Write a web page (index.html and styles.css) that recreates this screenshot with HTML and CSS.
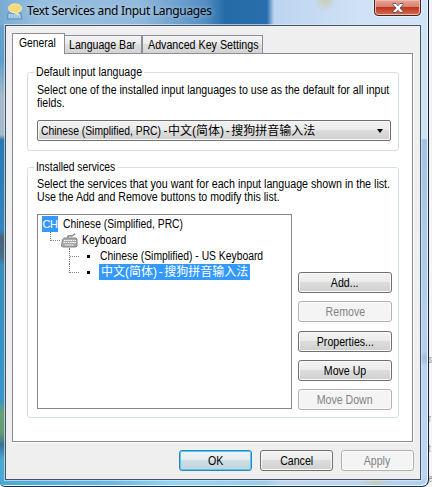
FILE: index.html
```html
<!DOCTYPE html>
<html lang="en">
<head>
<meta charset="utf-8">
<title>Text Services and Input Languages</title>
<link rel="stylesheet" href="styles.css">
</head>
<body>
<div class="desktop">
  <div class="window">
    <header class="titlebar">
      <svg class="app-icon" width="16" height="18" viewBox="0 0 16 18">
        <path d="M1 11h13l1 6H0z" fill="#8cb9df" stroke="#4e83b6" stroke-width=".7"/>
        <path d="M2 13h11M2 15h12" stroke="#dcecf8" stroke-dasharray="1.5 1"/>
        <path d="M8 2c4 0 6.500 1.700 6.500 4.200S12.500 10 10.500 10.300L11.500 13 7 10.500C3.500 10.500 1.500 8.500 1.500 6.300S4 2 8 2z" fill="#f8d878" stroke="#fff0bc"/>
      </svg>
      <h1>Text Services and Input Languages</h1>
      <button class="close" aria-label="Close"><svg width="12" height="10" viewBox="0 0 12 10"><path d="M1 .5h3l2 2.200 2-2.200h3v1.200L8 5l3 3.300v1.200H8L6 7.300 4 9.500H1V8.300L4 5 1 1.700z" fill="#fff" stroke="#515366" stroke-width=".9"/></svg></button>
    </header>
    <main class="client">
      <nav class="tabs">
        <div class="tab active"><span class="t small">General</span></div>
        <div class="tab lang"><span class="t">Language Bar</span></div>
        <div class="tab adv"><span class="t wide">Advanced Key Settings</span></div>
      </nav>
      <section class="page">
        <div class="group default">
          <h2><span class="t">Default input language</span></h2>
          <p><span class="t">Select one of the installed input languages to use as the default for all input</span><br><span class="t">fields.</span></p>
          <div class="combo"><div class="value"><span class="latin"><span class="t small">Chinese (Simplified, PRC) -</span></span><span class="cjk">中文(简体) - 搜狗拼音输入法</span></div><i class="arrow"></i></div>
        </div>
        <div class="group installed">
          <h2><span class="t small">Installed services</span></h2>
          <p><span class="t wide">Select the services that you want for each input language shown in the list.</span><br><span class="t">Use the Add and Remove buttons to modify this list.</span></p>
          <div class="row">
            <div class="tree">
              <div class="node"><b class="badge">CH</b><span class="t small">Chinese (Simplified, PRC)</span></div>
              <div class="node kb"><i class="elbow"></i>
                <svg width="17" height="15" viewBox="0 0 17 15"><path d="M7 5V3.500C7 2 9 3 10.500 3S13 1.500 14 .8" fill="none" stroke="#888" stroke-width="1.500"/><path d="M3 5h12l1 1v7l-1 1H1.500l-1-1 1-6.500z" fill="#aaa" stroke="#858585"/><path d="M3 7.500h12M2.500 9.500H15M4 12h9" stroke="#fff" stroke-dasharray="1.500 .7"/></svg>
                <span class="t small">Keyboard</span></div>
              <div class="node leaf"><i class="elbow"></i><i class="dot"></i><span class="t small">Chinese (Simplified) - US Keyboard</span></div>
              <div class="node leaf last"><i class="elbow"></i><i class="dot"></i><span class="selected cjk">中文(简体) - 搜狗拼音输入法</span></div>
            </div>
            <div class="actions">
              <button class="btn"><span class="t">Add...</span></button>
              <button class="btn" disabled><span class="t">Remove</span></button>
              <button class="btn props"><span class="t">Properties...</span></button>
              <button class="btn"><span class="t">Move Up</span></button>
              <button class="btn" disabled><span class="t">Move Down</span></button>
            </div>
          </div>
        </div>
      </section>
      <footer>
        <button class="btn ok"><span class="t">OK</span></button>
        <button class="btn"><span class="t">Cancel</span></button>
        <button class="btn" disabled><span class="t">Apply</span></button>
      </footer>
    </main>
  </div>
  <div class="behind"><span class="b1">s</span><span class="b2">r</span><span class="b3">t</span><span class="b4">e</span></div>
</div>
</body>
</html>
```
FILE: styles.css
```css
* { box-sizing: border-box; }
body { margin: 0; font: 12px/13px "Liberation Sans", "Noto Sans CJK SC", sans-serif; color: #000; overflow: hidden; }
h1, h2, p { margin: 0; font-weight: normal; }
i { font-style: normal; }
span { white-space: nowrap; }
.desktop { position: relative; width: 432px; height: 487px; background: #f4f4f4; overflow: hidden; }
.behind span { position: absolute; left: 429px; font-size: 11px; color: #718096; transform: scaleX(.5); transform-origin: 0 0; }
.b1 { top: 353px; } .b2 { top: 412px; } .b3 { top: 442px; } .b4 { top: 472px; }
.window {
  position: relative; width: 429px; height: 487px; padding: 0 7px 7px 5px;
  border-right: 1px solid #17222e; border-bottom: 1px solid #17303f; border-radius: 0 0 7px 5px;
  background:
    linear-gradient(90deg, #4aa9d6 0, #68b8e3 110px, #91d3f4 170px, #9cccf0 265px, #bcd5f1 280px, #bcd5f1 360px, #c3ceb8 376px, #b4d0ef 388px) 0 100% / 100% 8px no-repeat,
    linear-gradient(#cfe3f7 0, #cfe3f7 138px, #a4c4e5 140px, #b6d1ef 350px, #a1bfdd 358px, #b9d5f3 367px, #b9d5f3 470px) 100% 0 / 7px 100% no-repeat,
    linear-gradient(#6ea6d0 0, #5f9dcc 60px, #a4b9ca 95px, #a7bbcb 135px, #2779b3 140px, #3483bc 230px, #496176 238px, #466f8f 258px, #398dbf 265px, #3697c8 400px, #66a07c 412px, #669b72 432px, #38749a 445px, #4ba9d5 460px) 0 0 / 6px 100% no-repeat,
    #cfe3f7;
  box-shadow: inset -1px -1px #e8f5ff;
}
.titlebar { display: flex; height: 25px; margin: 0 -6px 0 -5px; padding: 2px 6px 0 7px; align-items: flex-start;
  background: radial-gradient(ellipse 12px 10px at 325px 1px, #c9ceb8, transparent), linear-gradient(90deg, #79acd2 0, #9ac0df 40px, #91b9dc 140px, #548fc4 205px, #256ba7 225px, #286eac 267px, #bdd5f0 274px, #cfe1f5 360px, #d0e4f8 100%); }
.titlebar h1 { margin: 1px 0 0 4px; font: 12px/16px "Noto Sans", "Open Sans", sans-serif; white-space: nowrap; letter-spacing: -.32px; text-shadow: 0 0 5px #fff8; }
.app-icon { flex: none; }
.close { width: 47px; height: 17px; margin: -3px 0 0 auto; padding: 1px 0 0; display: flex; align-items: center; justify-content: center; border: 1px solid #491f23; border-radius: 0 0 4px 4px; background: linear-gradient(#e5a699 0, #d98070 45%, #bd341e 48%, #d56c4b); box-shadow: inset 0 0 0 1px #efb9aa, 0 0 0 1px #e4effa; }
.client { height: 455px; padding: 7px 8px 0 6px; border: 1px solid #465361; background: #efefef; box-shadow: 0 0 0 1px #dceaf7aa; }
.tabs { display: flex; align-items: flex-end; height: 21px; position: relative; z-index: 1; }
.tab { height: 19px; border: 1px solid #8b8e98; background: linear-gradient(#f4f4f4, #eaeaea 48%, #dfdfdf 50%, #d3d3d3); padding: 3px 0 0 4px; }
.active { width: 53px; height: 21px; border-bottom: 0; background: #fff; padding: 3px 0 0 6px; }
.lang { width: 77px; border-left: 0; } .adv { width: 121px; padding-left: 5px; }
.page { width: 401px; height: 389px; margin-top: -1px; padding: 18px 14px; background: #fff; border: 1px solid #898995; box-shadow: 1px 1px #fff; }
.t { display: inline-block; transform: scaleX(.883); transform-origin: 0 0; letter-spacing: 0; vertical-align: top; }
.wide { transform: scaleX(.891); } .small { transform: scaleX(.861); }
.group { width: 372px; border: 1px solid #d5dfe5; border-radius: 3px; padding: 0 6px 0 9px; }
.group h2 { width: 110px; height: 13px; margin: -7px 0 0 -3px; padding: 0 2px; font-size: 12px; line-height: 13px; background: #fff; white-space: nowrap; }
.installed h2 { width: 84px; }
.group p { height: 26px; white-space: nowrap; }
.default { height: 79px; } .default p { margin-top: 5px; }
.combo { width: 354px; height: 21px; margin-top: 10px; padding: 1px 7px 0 3px; border: 1px solid #707070; border-radius: 2px; display: flex; align-items: center; justify-content: space-between; background: linear-gradient(#f2f2f2, #ebebeb 48%, #ddd 50%, #cfcfcf); box-shadow: inset 0 0 0 1px #f8f8f8; }
.value { display: flex; align-items: center; } .latin { width: 127px; }
.arrow { width: 0; border: 4px solid transparent; border-top-color: #000; border-bottom: 0; border-left-width: 3.5px; border-right-width: 3.5px; }
.cjk { word-spacing: -1.7px; font-family: "Liberation Sans", "Noto Sans CJK SC", sans-serif; }
.installed { height: 251px; margin-top: 16px; } .installed p { margin-top: 4px; }
.row { display: flex; gap: 6px; margin-top: 10px; }
.tree { width: 255px; height: 195px; border: 1px solid #828790; padding: 1px 0 0 4px; flex: none; }
.node { display: flex; align-items: center; height: 16px; }
.badge { flex: none; width: 16px; height: 16px; margin-right: 5px; background: #3399ff; color: #fff; font: 11px/17px "Liberation Sans", sans-serif; letter-spacing: -.5px; text-align: center; }
.elbow { flex: none; width: 11px; height: 16px; border-left: 1px dotted #777; align-self: flex-start; background: repeating-linear-gradient(90deg, #888 0 1px, transparent 1px 2px) 0 8px / 100% 1px no-repeat; }
.kb { padding-left: 8px; } .kb .elbow { height: 9px; } .kb svg { flex: none; margin-right: 4px; }
.leaf { padding-left: 27px; } .last .elbow { height: 9px; }
.dot { flex: none; width: 3px; height: 3px; margin: 0 10px 0 7px; background: #000; }
.selected { display: block; width: 151px; height: 16px; margin-left: -1px; padding-left: 2px; line-height: 16px; background: #3399ff; color: #fff; }
.actions { width: 94px; flex: none; padding-top: 58px; display: flex; flex-direction: column; gap: 8px; }
.btn { flex: none; width: 94px; height: 21px; padding: 0; font: 12px/18px "Liberation Sans", sans-serif; color: #000; border: 1px solid #707070; border-radius: 3px; background: linear-gradient(#f3f3f3, #ebebeb 48%, #ddd 50%, #cfcfcf); box-shadow: inset 0 0 0 1px #fafafa; }
.btn .t { transform-origin: 50% 0; }
.btn:disabled { color: #838383; border-color: #adb2b5; background: #f4f4f4; }
.props { margin-top: 1px; }
footer { display: flex; justify-content: flex-end; gap: 8px; margin-top: 8px; margin-right: -2px; }
footer .btn { width: 73px; }
.ok { border-color: #3c7fb1; box-shadow: inset 0 0 0 1px #43d0f5; background: linear-gradient(#edf3f6, #e4edf1 48%, #cfdde4 50%, #c1d3dc); }
```
